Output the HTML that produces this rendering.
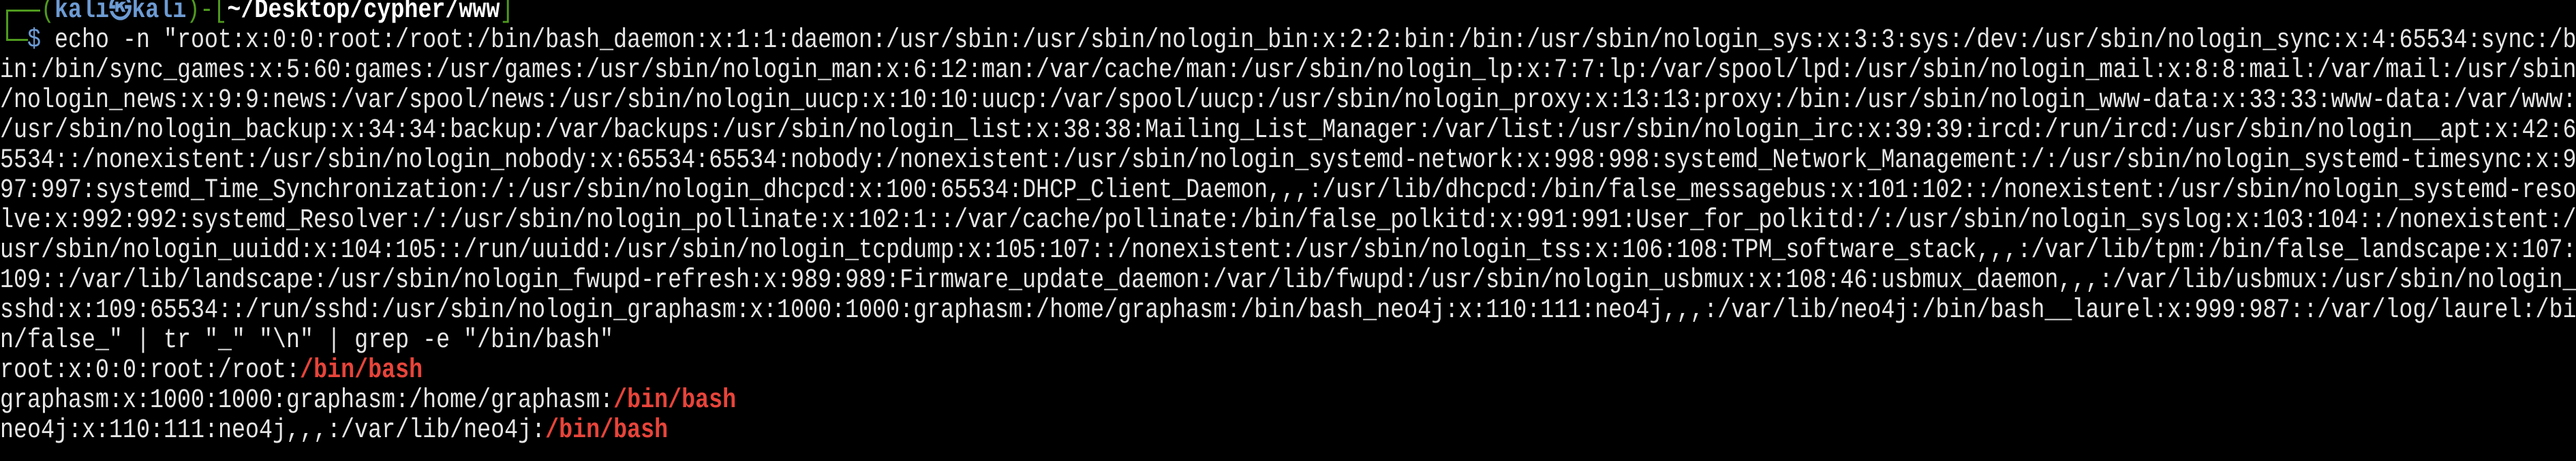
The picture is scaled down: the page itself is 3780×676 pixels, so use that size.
<!DOCTYPE html>
<html><head><meta charset="utf-8"><style>
html,body{margin:0;padding:0;background:#000;width:3780px;height:676px;overflow:hidden}
#t{position:absolute;left:0;top:-6px;font-family:"Liberation Mono",monospace;font-size:40px;line-height:44px;color:#e6e6e6;white-space:pre;transform:scaleX(0.8333);transform-origin:0 0}
.g{color:#4f9a1e}.b{color:#6d9bd3;font-weight:bold}.w{color:#fff;font-weight:bold}.r{color:#e8443a;font-weight:bold}.bl{color:#6d9bd3}
.box{position:absolute;background:#4f9a1e}
</style></head><body>
<div class="box" style="left:9px;top:14px;width:3px;height:46px"></div>
<div class="box" style="left:9px;top:14px;width:50px;height:3px"></div>
<div class="box" style="left:9px;top:57px;width:32px;height:3px"></div>
<div id="t">   <span class="g">(</span><span class="b">kali㉿kali</span><span class="g">)-[</span><span class="w">~/Desktop/cypher/www</span><span class="g">]</span>
  <span class="bl">$</span> echo -n "root:x:0:0:root:/root:/bin/bash_daemon:x:1:1:daemon:/usr/sbin:/usr/sbin/nologin_bin:x:2:2:bin:/bin:/usr/sbin/nologin_sys:x:3:3:sys:/dev:/usr/sbin/nologin_sync:x:4:65534:sync:/b
in:/bin/sync_games:x:5:60:games:/usr/games:/usr/sbin/nologin_man:x:6:12:man:/var/cache/man:/usr/sbin/nologin_lp:x:7:7:lp:/var/spool/lpd:/usr/sbin/nologin_mail:x:8:8:mail:/var/mail:/usr/sbin
/nologin_news:x:9:9:news:/var/spool/news:/usr/sbin/nologin_uucp:x:10:10:uucp:/var/spool/uucp:/usr/sbin/nologin_proxy:x:13:13:proxy:/bin:/usr/sbin/nologin_www-data:x:33:33:www-data:/var/www:
/usr/sbin/nologin_backup:x:34:34:backup:/var/backups:/usr/sbin/nologin_list:x:38:38:Mailing_List_Manager:/var/list:/usr/sbin/nologin_irc:x:39:39:ircd:/run/ircd:/usr/sbin/nologin__apt:x:42:6
5534::/nonexistent:/usr/sbin/nologin_nobody:x:65534:65534:nobody:/nonexistent:/usr/sbin/nologin_systemd-network:x:998:998:systemd_Network_Management:/:/usr/sbin/nologin_systemd-timesync:x:9
97:997:systemd_Time_Synchronization:/:/usr/sbin/nologin_dhcpcd:x:100:65534:DHCP_Client_Daemon,,,:/usr/lib/dhcpcd:/bin/false_messagebus:x:101:102::/nonexistent:/usr/sbin/nologin_systemd-reso
lve:x:992:992:systemd_Resolver:/:/usr/sbin/nologin_pollinate:x:102:1::/var/cache/pollinate:/bin/false_polkitd:x:991:991:User_for_polkitd:/:/usr/sbin/nologin_syslog:x:103:104::/nonexistent:/
usr/sbin/nologin_uuidd:x:104:105::/run/uuidd:/usr/sbin/nologin_tcpdump:x:105:107::/nonexistent:/usr/sbin/nologin_tss:x:106:108:TPM_software_stack,,,:/var/lib/tpm:/bin/false_landscape:x:107:
109::/var/lib/landscape:/usr/sbin/nologin_fwupd-refresh:x:989:989:Firmware_update_daemon:/var/lib/fwupd:/usr/sbin/nologin_usbmux:x:108:46:usbmux_daemon,,,:/var/lib/usbmux:/usr/sbin/nologin_
sshd:x:109:65534::/run/sshd:/usr/sbin/nologin_graphasm:x:1000:1000:graphasm:/home/graphasm:/bin/bash_neo4j:x:110:111:neo4j,,,:/var/lib/neo4j:/bin/bash__laurel:x:999:987::/var/log/laurel:/bi
n/false_" | tr "_" "\n" | grep -e "/bin/bash"
root:x:0:0:root:/root:<span class="r">/bin/bash</span>
graphasm:x:1000:1000:graphasm:/home/graphasm:<span class="r">/bin/bash</span>
neo4j:x:110:111:neo4j,,,:/var/lib/neo4j:<span class="r">/bin/bash</span></div>
</body></html>
